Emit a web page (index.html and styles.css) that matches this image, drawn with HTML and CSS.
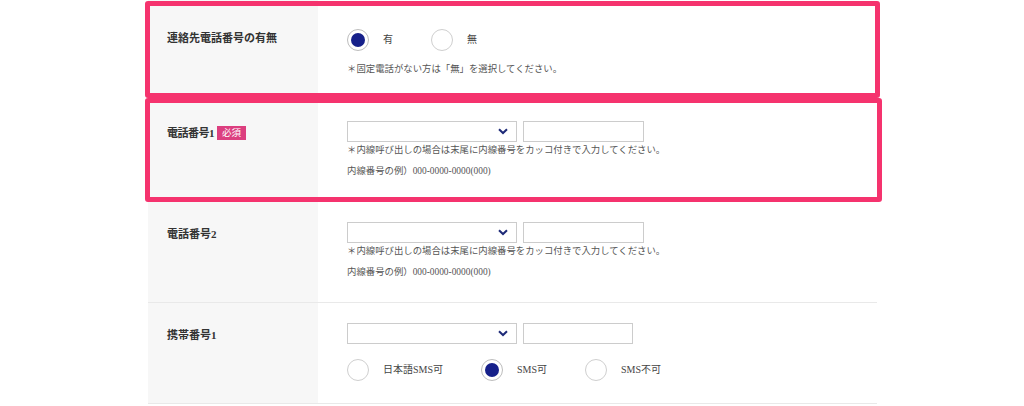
FILE: index.html
```html
<!DOCTYPE html>
<html lang="ja">
<head>
<meta charset="utf-8">
<link rel="stylesheet" href="styles.css">
</head>
<body>
<div class="form">
  <div class="row row-first hl hl-1">
    <div class="label label-first">連絡先電話番号の有無</div>
    <div class="field field-first">
      <div class="radios">
        <span class="radio-item"><span class="radio checked"></span><span class="radio-text">有</span></span>
        <span class="radio-item"><span class="radio"></span><span class="radio-text">無</span></span>
      </div>
      <p class="note note-first">＊固定電話がない方は「無」を選択してください。</p>
    </div>
  </div>
  <div class="row hl hl-2">
    <div class="label"><span class="label-tight">電話番号1</span><span class="badge">必須</span></div>
    <div class="field">
      <div class="inputs">
        <div class="select"><svg class="chev" width="10" height="7" viewBox="0 0 10 7"><path d="M1 1.2 L5 5 L9 1.2" fill="none" stroke="#1e2a78" stroke-width="2"/></svg></div>
        <div class="text-input"></div>
      </div>
      <p class="note">＊内線呼び出しの場合は末尾に内線番号をカッコ付きで入力してください。</p>
      <p class="note example">内線番号の例）000-0000-0000(000)</p>
    </div>
  </div>
  <div class="row">
    <div class="label">電話番号2</div>
    <div class="field">
      <div class="inputs">
        <div class="select"><svg class="chev" width="10" height="7" viewBox="0 0 10 7"><path d="M1 1.2 L5 5 L9 1.2" fill="none" stroke="#1e2a78" stroke-width="2"/></svg></div>
        <div class="text-input"></div>
      </div>
      <p class="note">＊内線呼び出しの場合は末尾に内線番号をカッコ付きで入力してください。</p>
      <p class="note example">内線番号の例）000-0000-0000(000)</p>
    </div>
  </div>
  <div class="row">
    <div class="label">携帯番号1</div>
    <div class="field">
      <div class="inputs">
        <div class="select"><svg class="chev" width="10" height="7" viewBox="0 0 10 7"><path d="M1 1.2 L5 5 L9 1.2" fill="none" stroke="#1e2a78" stroke-width="2"/></svg></div>
        <div class="text-input short"></div>
      </div>
      <div class="radios radios-sms">
        <span class="radio-item"><span class="radio"></span><span class="radio-text">日本語SMS可</span></span>
        <span class="radio-item"><span class="radio checked"></span><span class="radio-text">SMS可</span></span>
        <span class="radio-item"><span class="radio"></span><span class="radio-text">SMS不可</span></span>
      </div>
    </div>
  </div>
</div>
</body>
</html>
```

FILE: styles.css
```css
* { box-sizing: border-box; }
html, body { margin: 0; padding: 0; background: #ffffff; }
body {
  font-family: "Liberation Serif", "Noto Sans CJK JP", serif;
  color: #333333;
  overflow: hidden;
  height: 406px;
}
.form {
  margin-left: 148px;
  width: 729px;
}
.row {
  position: relative;
  display: flex;
  height: 101px;
  border-bottom: 1px solid #e9e9e9;
}
.label {
  width: 170px;
  flex-shrink: 0;
  background: #f7f7f7;
  padding: 24px 0 0 19px;
  font-size: 11px;
  line-height: 16px;
  font-weight: bold;
  color: #333333;
  display: block;
}
.label-tight { letter-spacing: -0.5px; }
.label-first { padding-top: 30px; }
.field {
  flex: 1;
  padding: 20px 0 0 29px;
}
.field-first { padding-top: 29px; }
.badge {
  display: inline-block;
  vertical-align: top;
  margin-left: 3px;
  margin-top: 1px;
  height: 14px;
  line-height: 14px;
  padding: 0 5px;
  background: #dc3f7f;
  color: #ffffff;
  font-size: 9.5px;
  font-weight: normal;
}
.radios {
  display: flex;
  align-items: center;
  gap: 38px;
  height: 22px;
}
.radios-sms { margin-top: 15px; }
.radio-item {
  display: flex;
  align-items: center;
}
.radio {
  width: 22px;
  height: 22px;
  border-radius: 50%;
  border: 1px solid #cfcfcf;
  background: #ffffff;
  display: flex;
  align-items: center;
  justify-content: center;
}
.radio.checked { border-color: #bdbdbd; }
.radio.checked::before {
  content: "";
  width: 14px;
  height: 14px;
  border-radius: 50%;
  background: #16208a;
}
.radio-text {
  margin-left: 14px;
  font-size: 10px;
  line-height: 14px;
  color: #444444;
}
.note {
  margin: 0;
  font-size: 9.4px;
  line-height: 16px;
  color: #555555;
}
.note-first { margin-top: 10px; }
.example { margin-top: 5px; }
.inputs {
  display: flex;
  gap: 6px;
}
.select {
  width: 170px;
  height: 21px;
  border: 1px solid #cccccc;
  background: #ffffff;
  display: flex;
  align-items: center;
  justify-content: flex-end;
  padding-right: 8px;
}
.chev { display: block; }
.text-input {
  width: 121px;
  height: 21px;
  border: 1px solid #cccccc;
  background: #ffffff;
}
.text-input.short { width: 110px; }
.hl::after {
  content: "";
  position: absolute;
  border: 5px solid #f5336e;
  border-radius: 3px;
  pointer-events: none;
}
.hl-1::after { left: -3px; right: -3px; top: 1px; bottom: 2px; }
.hl-2::after { left: -3px; right: -5px; top: -3px; bottom: -1px; }
```
